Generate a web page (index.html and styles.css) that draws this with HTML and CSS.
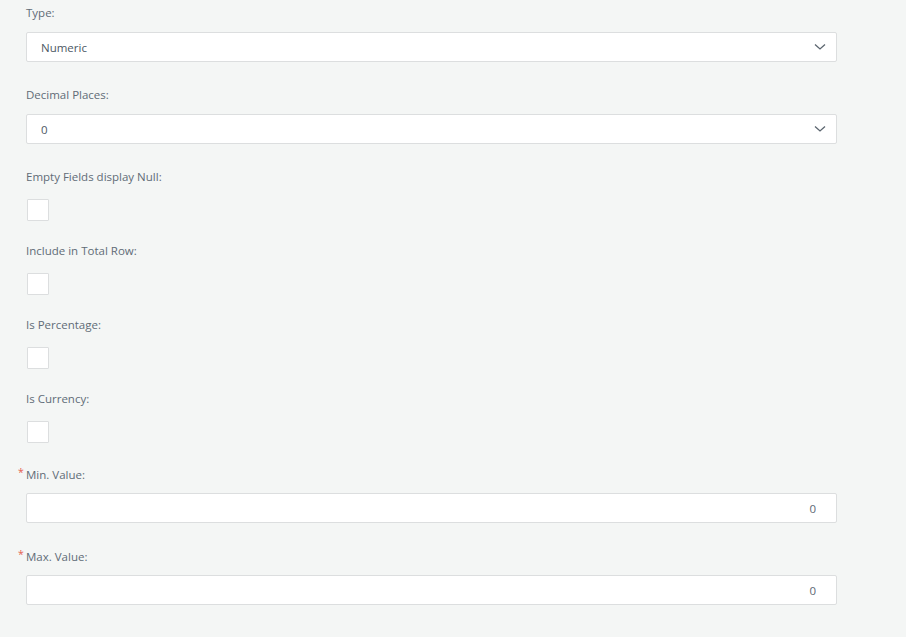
FILE: index.html
```html
<!DOCTYPE html>
<html lang="en">
<head>
<meta charset="utf-8">
<title>Column settings</title>
<link rel="stylesheet" href="styles.css">
</head>
<body>
<form class="form">
  <div class="field field-select">
    <label class="label">Type:</label>
    <div class="select">
      <span class="select-value">Numeric</span>
      <svg class="chevron" width="12" height="8" viewBox="0 0 12 8"><path d="M1 1.5 L6 6 L11 1.5" fill="none" stroke="#5b656f" stroke-width="1.3"/></svg>
    </div>
  </div>
  <div class="field field-select">
    <label class="label">Decimal Places:</label>
    <div class="select">
      <span class="select-value">0</span>
      <svg class="chevron" width="12" height="8" viewBox="0 0 12 8"><path d="M1 1.5 L6 6 L11 1.5" fill="none" stroke="#5b656f" stroke-width="1.3"/></svg>
    </div>
  </div>
  <div class="field field-check">
    <label class="label">Empty Fields display Null:</label>
    <input type="checkbox" class="check">
  </div>
  <div class="field field-check">
    <label class="label">Include in Total Row:</label>
    <input type="checkbox" class="check">
  </div>
  <div class="field field-check">
    <label class="label">Is Percentage:</label>
    <input type="checkbox" class="check">
  </div>
  <div class="field field-check field-check-last">
    <label class="label">Is Currency:</label>
    <input type="checkbox" class="check">
  </div>
  <div class="field field-input">
    <label class="label label-input required">Min. Value:</label>
    <input type="text" class="number" value="0">
  </div>
  <div class="field field-input">
    <label class="label label-input required">Max. Value:</label>
    <input type="text" class="number" value="0">
  </div>
</form>
</body>
</html>
```
FILE: styles.css
```css
html, body {
  margin: 0;
  padding: 0;
  background: #f4f6f5;
}
body {
  font-family: "Open Sans", "Noto Sans", sans-serif;
  font-size: 11.5px;
  color: #5d6874;
}
.form {
  padding: 5px 0 0 26px;
  width: 811px;
  display: flex;
  flex-direction: column;
}
.field {
  display: flex;
  flex-direction: column;
  align-items: flex-start;
}
.field-select { margin-bottom: 25px; }
.field-check { margin-bottom: 22px; }
.field-check-last { margin-bottom: 24px; }
.field-input { margin-bottom: 26px; }
.label {
  display: block;
  line-height: 16px;
  height: 16px;
  margin-bottom: 11px;
  color: #616c77;
  position: relative;
}
.label-input { margin-bottom: 10px; }
.required::before {
  content: "*";
  position: absolute;
  left: -8px;
  top: -3px;
  color: #e4604f;
  font-size: 10.5px;
}
.select {
  box-sizing: border-box;
  width: 811px;
  height: 30px;
  background: #fff;
  border: 1px solid #dcdedf;
  border-radius: 2px;
  display: flex;
  align-items: center;
  justify-content: space-between;
  padding: 0 10px 0 14px;
}
.select-value {
  color: #4d5864;
}
.chevron {
  display: block;
}
.check {
  appearance: none;
  -webkit-appearance: none;
  box-sizing: border-box;
  margin: 3px 0 0 1px;
  width: 22px;
  height: 22px;
  background: #fff;
  border: 1px solid #dcdedf;
  border-radius: 1px;
}
.number {
  box-sizing: border-box;
  width: 811px;
  height: 30px;
  margin: 0;
  background: #fff;
  border: 1px solid #dcdedf;
  border-radius: 2px;
  padding: 0 20px 0 14px;
  text-align: right;
  font-family: "Open Sans", "Noto Sans", sans-serif;
  font-size: 11.5px;
  color: #5d6874;
  outline: none;
}
```
